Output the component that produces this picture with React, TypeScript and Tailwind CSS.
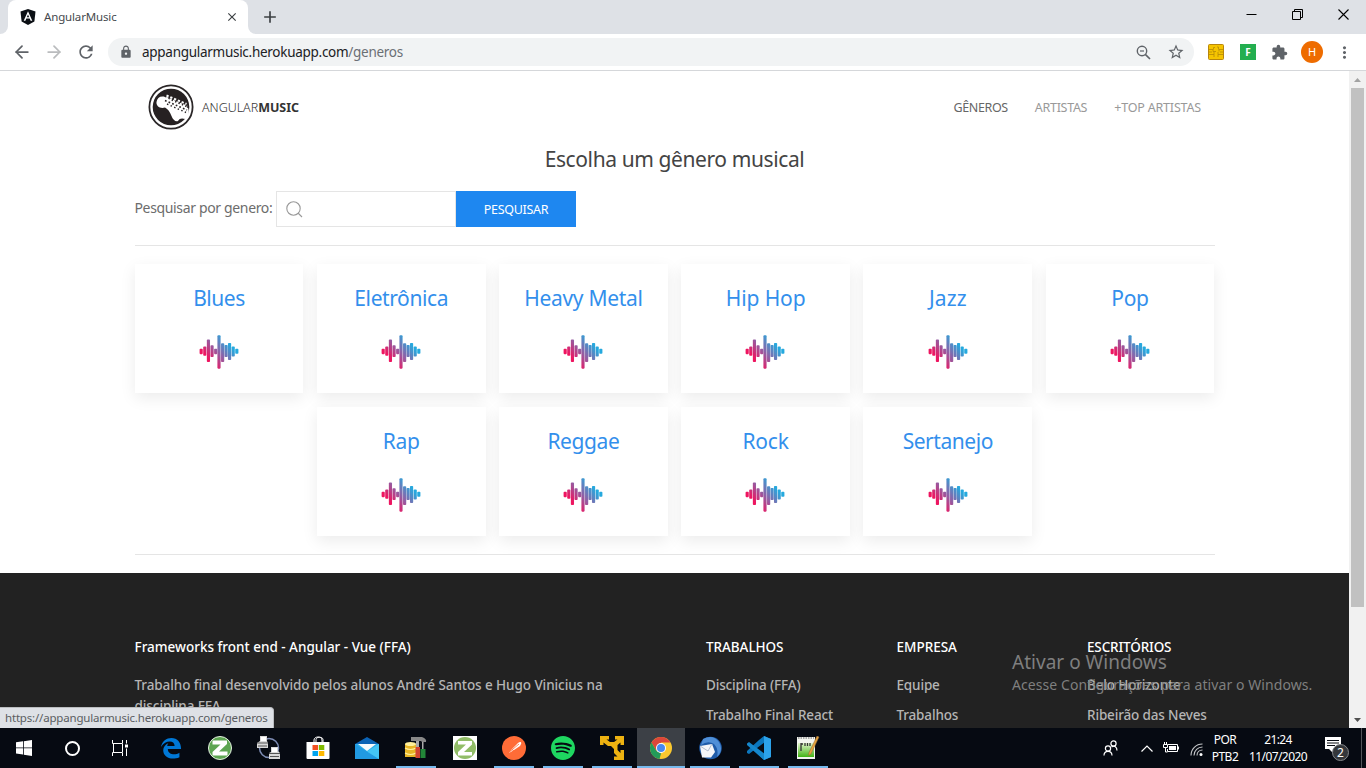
import React from "react";
import { ArrowLeft, ArrowRight } from "lucide-react";
import { MdRefresh, MdLock, MdStarBorder, MdExtension, MdMoreVert, MdAdd, MdClose } from "react-icons/md";
import { SiSpotify } from "react-icons/si";

const genres = [
  ["Blues", "tracking-[-0.45px]"],
  ["Eletrônica", "tracking-[-0.4px]"],
  ["Heavy Metal", "tracking-[-0.3px]"],
  ["Hip Hop", "tracking-[-0.1px]"],
  ["Jazz", "tracking-[0.1px]"],
  ["Pop", "tracking-[-0.3px]"],
  ["Rap", "tracking-[-0.3px]"],
  ["Reggae", "tracking-[-0.4px]"],
  ["Rock", "tracking-[-0.2px]"],
  ["Sertanejo", "tracking-[-0.45px]"],
];

const bars = [
  [46, 72, 88], [57, 65, 93], [68, 44, 112], [79, 61, 97], [90, 72, 88], [100, 31, 132],
  [111, 55, 112], [121.5, 60, 97], [132, 54, 106], [143, 65, 95], [154, 72, 87],
];

function Wave() {
  return (
    <svg className="-ml-[0.5px] h-[34px] w-10" viewBox="40 30 120 103">
      <defs>
        <linearGradient id="wave" gradientUnits="userSpaceOnUse" x1="70" y1="105" x2="132" y2="58">
          <stop offset="0" stopColor="#ee1560" />
          <stop offset="0.5" stopColor="#8c63a8" />
          <stop offset="1" stopColor="#25a9de" />
        </linearGradient>
      </defs>
      {bars.map(([x, a, b]) => (
        <rect key={x} x={x - 4.8} y={a} width="9.6" height={b - a} rx="2.5" fill="url(#wave)" />
      ))}
    </svg>
  );
}

function GuitarLogo() {
  return (
    <svg className="-mt-0.5 size-[46px]" viewBox="0 0 46 46">
      <circle cx="23" cy="23" r="21.6" fill="#fff" stroke="#2b2728" strokeWidth="1.8" />
      <circle cx="23" cy="23" r="18.3" fill="#262122" />
      <path d="M14.500 12.500C18 12.500 20 15 24 17L40 24C41.500 27 41 33 37.500 35C34 34 31.500 34 30 37C27.500 38 25 36 23.500 32C22 28 20 25 17 23.500C12 25 8 22 8.500 18C9 14.500 11 12.500 14.500 12.500Z" fill="#fff" />
      <path d="M18 14l21 9" stroke="#fff" strokeWidth="2.600" strokeDasharray="2.300 1.400" />
      <path d="M18.500 11.500l20 8.500" stroke="#fff" strokeWidth="2" strokeDasharray="2.300 1.800" />
      <path d="M17 16.500l22 9.500" stroke="#262122" strokeWidth="1.600" strokeDasharray="1.700 2.200" />
      <path d="M19 20l19 8.500" stroke="#262122" strokeWidth="1.400" strokeDasharray="1.500 2.400" />
    </svg>
  );
}

function Chip() {
  return (
    <svg className="size-4" viewBox="0 0 16 16">
      <rect x=".5" y=".5" width="15" height="15" rx="1" fill="#f5c400" stroke="#b8860b" />
      <path d="M1 5.500h4v2H8M15 5.500h-4v2M1 10.500h5V8M15 10.500h-5V8M1 8h3M12 8h3M5.500 3.500v2M5.500 3.500H7M10.500 5.500V3H9M6 10.500v2.500M10 10.500v2.500" fill="none" stroke="#b58a06" strokeWidth=".8" />
    </svg>
  );
}

function BrowserChrome() {
  return (
    <header className="shrink-0 border-b border-[#d5d7da] bg-white">
      <div className="flex h-[34px] bg-[#dee1e6]">
        <div className="flex w-2 bg-white"><div className="w-2 rounded-br-lg bg-[#dee1e6]" /></div>
        <div className="flex w-[240px] items-center rounded-t-lg bg-white pl-3">
          <svg className="size-4" viewBox="0 0 16 16">
            <path d="M8 0 15.500 2.600 14.400 12.500 8 16 1.600 12.500.5 2.600Z" fill="#0b0f14" />
            <path d="M8 2.200 3.700 11.800h1.700l.9-2.200h3.400l.9 2.200h1.700ZM8 5.500l1.200 2.800H6.800Z" fill="#fff" fillRule="evenodd" />
          </svg>
          <span className="ml-2 text-[11.5px] tracking-[-0.15px] text-[#45494d]">AngularMusic</span>
          <MdClose className="mr-[9px] ml-auto size-[14px] text-[#3c4043]" />
        </div>
        <div className="flex w-2 bg-white"><div className="w-2 rounded-bl-lg bg-[#dee1e6]" /></div>
        <MdAdd className="mt-[7px] ml-1 size-5 text-[#3c4043]" />
        <div className="mr-[17.500px] ml-auto flex h-7 items-center gap-[35px]">
          <svg className="size-[11px]" viewBox="0 0 11 11"><path d="M.5 5.500h10" stroke="#000" /></svg>
          <svg className="size-[11px]" viewBox="0 0 11 11" fill="none" stroke="#000"><path d="M.5 2.500h8v8h-8zM2.500 2.500v-2h8v8h-2" /></svg>
          <svg className="size-[11px]" viewBox="0 0 11 11"><path d="m.5.500 10 10m0-10-10 10" stroke="#000" strokeWidth="1.100" /></svg>
        </div>
      </div>
      <div className="flex h-9 items-center">
        <div className="flex w-[108px] items-center gap-[14px] pl-3">
          <ArrowLeft className="size-5 text-[#5f6368]" strokeWidth={2.1} />
          <ArrowRight className="-ml-[2px] size-5 text-[#babcbe]" strokeWidth={2.1} />
          <MdRefresh className="-ml-[2px] size-5 text-[#5f6368]" />
        </div>
        <div className="flex h-7 w-[1086px] items-center rounded-full bg-[#f1f3f4] pl-[11px]">
          <MdLock className="size-[14px] text-[#5f6368]" />
          <span className="ml-[9px] text-[13.500px] tracking-[-0.28px] text-[#202124]">appangularmusic.herokuapp.com<span className="text-[#6b6f74]">/generos</span></span>
          <svg className="ml-auto size-[15px]" viewBox="0 0 15 15" fill="none" stroke="#5f6368" strokeWidth="1.400"><circle cx="6" cy="6" r="4.700" /><path d="M9.300 9.300 14 14" strokeWidth="1.700" /><path d="M4 6h4" strokeWidth="1.200" /></svg>
          <MdStarBorder className="mr-[9px] ml-4 size-[18px] text-[#5f6368]" />
        </div>
        <div className="ml-[14px] flex items-center">
          <Chip />
          <div className="ml-4 flex size-4 items-center justify-center bg-[#23ae4f] text-[10px] font-bold text-white">F</div>
          <MdExtension className="ml-[15px] size-[17px] text-[#5f6368]" />
          <div className="ml-[13px] flex size-[22px] items-center justify-center rounded-full bg-[#ee6c00] text-[11px] text-white">H</div>
          <MdMoreVert className="ml-3 size-[19px] text-[#5f6368]" />
        </div>
      </div>
    </header>
  );
}

function Footer() {
  const cols = [
    { w: "w-[190.500px]", title: "TRABALHOS", t: "tracking-[-0.05px]", items: ["Disciplina (FFA)", "Trabalho Final React"] },
    { w: "w-[190.500px]", title: "EMPRESA", t: "tracking-[0px]", items: ["Equipe", "Trabalhos"] },
    { w: "w-[128px]", title: "ESCRITÓRIOS", t: "tracking-[-0.15px]", items: ["Belo Horizonte", "Ribeirão das Neves"] },
  ];
  return (
    <footer className="mt-[18px] flex h-[155px] overflow-hidden bg-[#222] pt-[64px] pl-[134.500px] text-[13.500px] font-medium whitespace-nowrap text-[#b5b5b5]">
      <div className="w-[571.500px] shrink-0">
        <h3 className="leading-5 tracking-[0px] text-white">Frameworks front end - Angular - Vue (FFA)</h3>
        <p className="mt-[18px] w-[500px] leading-[21px] tracking-[-0.08px] whitespace-normal">Trabalho final desenvolvido pelos alunos André Santos e Hugo Vinicius na<br />disciplina FFA</p>
      </div>
      {cols.map((c) => (
        <div key={c.title} className={"shrink-0 " + c.w}>
          <h3 className={"leading-5 text-white " + c.t}>{c.title}</h3>
          <ul className="mt-[18px] flex flex-col gap-2.5 tracking-[-0.15px]">
            {c.items.map((i) => <li key={i} className="leading-5">{i}</li>)}
          </ul>
        </div>
      ))}
    </footer>
  );
}

function Page() {
  return (
    <main className="relative flex min-h-0 flex-1 overflow-hidden bg-white">
      <div className="w-[1349px] shrink-0">
        <div className="mx-auto w-[1080px]">
          <nav className="flex h-[72px] items-center pt-0.5 pl-[13px] text-[12.500px]">
            <GuitarLogo />
            <span className="ml-[8.500px] tracking-[-0.03px] text-[#333]"><span className="font-light">ANGULAR</span><b>MUSIC</b></span>
            <div className="mr-[13.500px] ml-auto flex gap-[27px] text-[#999]">
              <span className="tracking-[-0.35px] text-[#666]">GÊNEROS</span>
              <span className="tracking-[-0.3px]">ARTISTAS</span>
              <span className="tracking-[-0.18px]">+TOP ARTISTAS</span>
            </div>
          </nav>
          <h1 className="-mt-px pt-px text-center text-[21px] leading-8 tracking-[-0.4px] text-[#444]">Escolha um gênero musical</h1>
          <div className="mt-4 flex h-9 items-center text-[14px] text-[#6c6c6c]">
            <span className="w-[141.500px] pb-[3px] tracking-[-0.35px]">Pesquisar por genero:</span>
            <div className="flex h-9 w-[180px] items-center border border-[#e5e5e5] pl-[9px]">
              <svg className="size-[17px]" viewBox="0 0 17 17" fill="none" stroke="#999" strokeWidth="1.100"><circle cx="7.500" cy="7.500" r="6.700" /><path d="m12 12 4 4" /></svg>
            </div>
            <button className="h-9 w-[120px] bg-[#1e87f0] pt-0.5 text-[12.500px] tracking-[-0.3px] text-white">PESQUISAR</button>
          </div>
          <hr className="mt-[18px] border-[#e5e5e5]" />
          <section className="mt-[18px] flex flex-wrap justify-center gap-x-[13.500px] gap-y-[14px]">
            {genres.map(([g, t]) => (
              <article key={g} className="flex h-[129px] w-[168.700px] flex-col items-center bg-white pt-[18px] shadow-[0_5px_15px_rgba(0,0,0,0.08)]">
                <h2 className={"text-[21px] leading-8 text-[#338fec] " + t}>{g}</h2>
                <div className="mt-[21px]"><Wave /></div>
              </article>
            ))}
          </section>
          <hr className="mt-[18px] border-[#e5e5e5]" />
        </div>
        <Footer />
      </div>
      <div className="flex w-[17px] flex-col items-center bg-[#f1f1f1]">
        <svg className="h-[17px] w-[17px]" viewBox="0 0 17 17"><path d="m5 11 3.500-4 3.500 4z" fill="#a3a3a3" /></svg>
        <div className="h-[519px] w-[13px] bg-[#c1c1c1]" />
        <svg className="mt-auto h-[17px] w-[17px]" viewBox="0 0 17 17"><path d="m5 7 3.500 4 3.500-4z" fill="#505050" /></svg>
      </div>
      <div className="absolute top-[579px] left-[1012px] whitespace-nowrap text-[#7f7f7f]">
        <div className="text-[19px] leading-[24px] tracking-[0.02px]">Ativar o Windows</div>
        <div className="text-[14px] leading-[21px] tracking-[0.08px]">Acesse Configurações para ativar o Windows.</div>
      </div>
      <div className="absolute bottom-0 left-0 flex h-[21px] w-[274px] items-center rounded-tr border-t border-r border-[#bbbdc0] bg-[#dee1e6] pl-[5px] text-[11.500px] tracking-[-0.18px] whitespace-nowrap text-[#5a5d61]">https://appangularmusic.herokuapp.com/generos</div>
    </main>
  );
}

const S = ({ children }: { children: React.ReactNode }) => <svg className="size-6" viewBox="0 0 24 24">{children}</svg>;

const apps: { icon: React.ReactNode; open?: boolean; active?: boolean }[] = [
  { icon: <svg className="size-[22px]" viewBox="0 0 24 24"><path d="M1 11C2.500 4 7 1 12.500 1 19 1 23 6 23 13H8.500c.2 6 7.500 7.500 12.700 4.300v4.700C12 26 3.500 22 3.500 14.500 3.500 11 6 8 9.200 6.500c-1 1.200-1.200 2.500-1.300 3.200h8C16 3.500 6 3 1 11Z" fill="#0078d7" /></svg> },
  { icon: <S><circle cx="12" cy="12" r="11.500" fill="#5da552" stroke="#e7f2e4" /><path d="M4.500 4.500h14.500v3.500L11 15.500h8.500V19.500H4.500v-3.500L12.500 8.500h-8z" fill="#fff" /></S> },
  { icon: <S><circle cx="12" cy="12" r="9.500" fill="none" stroke="#7d8cb4" strokeWidth="1.500" /><path d="M3 0h7v5l1 2v5H0V7l3-2zM14 11h7v4l2 2v6H12v-6l2-1z" fill="#d8d8d8" /><path d="M4 1h5v4H4zM15 12h5v4h-5z" fill="#fff" /><path d="M0 7h11M1 10h9M12 17.500h11M13 20.500h9" stroke="#555" strokeWidth="1.200" /></S> },
  { icon: <S><path d="M8 7V4c0-4 8-4 8 0v3M10 7V3.500c0-3 7-3 7 0V7" fill="none" stroke="#fff" /><path d="M.5 6h23v16q0 1-1 1h-21q-1 0-1-1Z" fill="#fff" /><path d="M6.500 9H12v5H6.500z" fill="#f25022" /><path d="M12.800 9h5.500v5h-5.500z" fill="#7fba00" /><path d="M6.500 15H12v5H6.500z" fill="#00a4ef" /><path d="M12.800 15h5.500v5h-5.500z" fill="#ffb900" /></S> },
  { icon: <S><path d="M0 8 12 1l12 7v3H0z" fill="#0b63b5" /><path d="M0 8h24v15H0z" fill="#2badea" /><path d="M0 8 24 23H0z" fill="#1b8ddc" opacity=".6" /><path d="m12 15.500 12-7.500v15z" fill="#43c5f5" /><path d="M3 8h18l-9 7z" fill="#f6fafc" /></S> },
  { icon: <S><path d="M1 8h11v13H1z" fill="#e8b626" /><ellipse cx="6.500" cy="8" rx="5.500" ry="2" fill="#fff09a" /><path d="M1 12q5.500 3 11 0M1 17q5.500 3 11 0" fill="none" stroke="#fff0a0" strokeWidth="1.200" /><path d="M7 1h11q5 2 4 5h-4L17 5H7z" fill="#888" /><path d="M12 5h3v9h-3z" fill="#aaa" /><path d="M11.500 11h4.500v11h-4.500z" fill="#d24432" /><path d="M18 6h1.500v8H18z" fill="#aaa" /><path d="M16.500 13h5v9h-5z" fill="#228638" /></S>, open: true },
  { icon: <S><path d="M0 0h24v24H0z" fill="#fff" /><circle cx="12" cy="12" r="11" fill="#91bd67" /><path d="M5 5h14v3.500L11 16h8v3.500H5v-3.500L13 8.500H5z" fill="#fff" /></S> },
  { icon: <S><circle cx="12" cy="12" r="12" fill="#ff6c37" /><path d="m7 17 3-4 6-6c2-2 4-1 3 1l-1 2-6 4zM5 18.500l5-3" fill="#fff" /><path d="m8 15.500 9-7.500M10 13.500l2 1.500" stroke="#ff6c37" strokeWidth=".8" /></S>, open: true },
  { icon: <SiSpotify className="size-6 text-[#1ed760]" />, open: true },
  { icon: <S><path d="M0 0h9v3.500H6.500L10 6h4l3.500-2.500H15V0h9v9h-3.500V6.500L17.500 9v5l3 3v-3H24v10H14v-3.500h3.500L14 17v-4l-3-3H8L3.500 6.500V9H0z" fill="#edb211" /></S>, open: true },
  { icon: <S><circle cx="12" cy="12" r="11" fill="#fbc82f" /><path d="M2.500 6.500A11 11 0 0 1 21.500 6.500H12v5.500l-4.700 2.700z" fill="#dc463a" /><path d="M2.500 6.500 7.300 14.700 12 17.500 10.500 23A11 11 0 0 1 2.500 6.500Z" fill="#239b59" /><circle cx="12" cy="12" r="5" fill="#fff" /><circle cx="12" cy="12" r="4" fill="#4888ef" /></S>, active: true },
  { icon: <S><circle cx="12.500" cy="12" r="11.300" fill="#1e5ba8" /><path d="M5 3Q15-2 21 6q5 8-2 15 2-8-3-13Q10 4 3 9Z" fill="#4f8fd7" /><path d="m2 10 12-2 3 8-4 5.500H4z" fill="#f4f6f9" /><path d="m2 10 8 5 4-7" fill="none" stroke="#b2bdce" /></S>, open: true },
  { icon: <S><path d="M17 0 24 3v18l-7 3L6.500 14.500 2 18 0 17v-2l12-11z" fill="#0b76bd" /><path d="M0 7.500 2 6l15 11.500V24L0 9z" fill="#1587cc" /><path d="m17 0 7 3v18l-7 3z" fill="#2ca2ea" /><path d="M17 6.800v10.400L10 12z" fill="#080c13" /></S>, open: true },
  { icon: <S><defs><linearGradient id="pad" x2="0" y2="1"><stop stopColor="#e3f5cc" /><stop offset="1" stopColor="#42b414" /></linearGradient></defs><path d="M1 1h18v22H1z" fill="#f3f5ef" /><path d="M2 7h16v14H2z" fill="url(#pad)" /><path d="M2 2h16" stroke="#aaa" strokeDasharray="1.500 1" strokeWidth="2" /><path d="M5 7v8M5 8h2M9 7v3M11.500 7v3M14 7v3" stroke="#333" strokeWidth="1.300" /><path d="m21 0 2 1-8 17-2.500 1.500.5-3z" fill="#e7a33e" stroke="#8c6b3d" strokeWidth=".5" /></S>, open: true },
];

function Taskbar() {
  return (
    <div className="flex h-10 shrink-0 bg-[#060a12] text-white">
      <div className="flex w-12 items-center justify-center"><svg className="size-4" viewBox="0 0 16 16"><path d="M0 2.300 7 1.300v6.200H0zM7.800 1.200 16 0v7.500H7.800zM0 8.300h7v6.200l-7-1zM7.800 8.300H16V16l-8.200-1.300z" fill="#fff" /></svg></div>
      <div className="flex w-12 items-center justify-center"><div className="size-[15px] rounded-full border-2 border-white" /></div>
      <div className="flex w-[50.500px] items-center pl-4"><svg className="size-4" viewBox="0 0 16 16" fill="none" stroke="#fff"><path d="M.5 0v3.500h10V0M.5 16v-3.500h10V16M1.500 4v8M10.500 4v8M14.500 0v3.500M14.500 8.500V16" /><path d="M13 4.500h3v3h-3z" fill="#fff" stroke="none" /></svg></div>
      {apps.map((a, i) => (
        <div key={i} className="flex w-[49px] shrink-0 flex-col items-center">
          <div className={a.active ? "flex h-[38px] w-12 items-center justify-center bg-[#3c4046] pt-0.5" : "flex h-[38px] w-12 items-center justify-center pt-0.5"}>{a.icon}</div>
          {a.active ? <div className="h-0.5 w-12 bg-[#76b9ed]" /> : a.open ? <div className="h-0.5 w-10 bg-[#76b9ed]" /> : null}
        </div>
      ))}
      <div className="ml-auto flex items-center text-[12px] leading-[17px] whitespace-nowrap">
        <svg className="size-4" viewBox="0 0 16 16" fill="none" stroke="#fff" strokeWidth="1.200"><circle cx="11.500" cy="3.500" r="2.600" /><circle cx="6" cy="8.500" r="2.600" /><path d="M2 15.500c0-5.500 8-5.500 8 0M9.500 7c3-2 5.500 0 5.500 3.500" /></svg>
        <svg className="ml-[23px] h-[7px] w-3" viewBox="0 0 12 7"><path d="m.5 6.500 5.500-5.500 5.500 5.500" fill="none" stroke="#fff" strokeWidth="1.200" /></svg>
        <svg className="ml-2.5 h-3 w-4" viewBox="0 0 16 12"><path d="M5 2.500h9.500v7H4.500V7" fill="none" stroke="#fff" /><path d="M6 4h7v4H6zM15 4.500h1v3h-1z" fill="#fff" /><path d="M.5 2.500h4v3h-4zM1.500 0v2M3.500 0v2M2.500 5v5h2" fill="none" stroke="#fff" /></svg>
        <svg className="mt-0.5 ml-[11px] size-[13px]" viewBox="0 0 13 13" fill="none" stroke="#c5c7ca" strokeWidth="1.100"><path d="M1 12.500C1 6 6 1 12.500 1M4 12.500c0-5 4-8.500 8.500-8.500M7 12.500C7 9 9.500 7 12.500 7" /><circle cx="11" cy="11.500" r="1.500" fill="#fff" stroke="none" /></svg>
        <div className="-mt-px ml-[7px] w-[30px] text-center tracking-[-0.5px]"><div>POR</div><div>PTB2</div></div>
        <div className="-mt-px ml-[7px] w-[62px] text-center tracking-[-0.6px]"><div>21:24</div><div>11/07/2020</div></div>
        <div className="relative ml-[15px] h-6 w-6">
          <svg className="size-[18px]" viewBox="0 0 18 18"><path d="M1 1h16v12H9v4l-4-4H1z" fill="#fff" /><path d="M3 4.500h12M3 7h12M3 9.500h8" stroke="#080c13" /></svg>
          <div className="absolute top-2 left-2 flex size-[17px] items-center justify-center rounded-full border border-[#84878b] bg-[#34373b] text-[12px]">2</div>
        </div>
        <div className="mr-1 ml-[13px] h-10 w-px bg-[#52555a]" />
      </div>
    </div>
  );
}

export default function App() {
  return (
    <div className="flex h-[768px] w-[1366px] flex-col overflow-hidden bg-white font-['Noto_Sans',sans-serif]">
      <BrowserChrome />
      <Page />
      <Taskbar />
    </div>
  );
}
